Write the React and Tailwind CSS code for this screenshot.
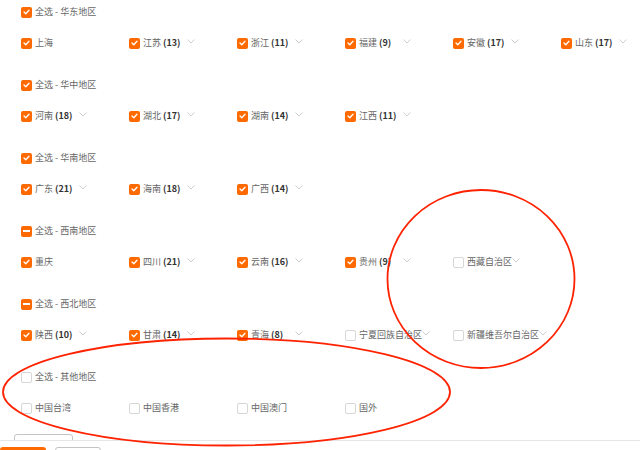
import React from "react";

const GROUPS = [
  {
    title: "华东地区",
    state: "all",
    items: [
      { name: "上海", on: true },
      { name: "江苏", count: 13, on: true },
      { name: "浙江", count: 11, on: true },
      { name: "福建", count: 9, on: true },
      { name: "安徽", count: 17, on: true },
      { name: "山东", count: 17, on: true },
    ],
  },
  {
    title: "华中地区",
    state: "all",
    items: [
      { name: "河南", count: 18, on: true },
      { name: "湖北", count: 17, on: true },
      { name: "湖南", count: 14, on: true },
      { name: "江西", count: 11, on: true },
    ],
  },
  {
    title: "华南地区",
    state: "all",
    items: [
      { name: "广东", count: 21, on: true },
      { name: "海南", count: 18, on: true },
      { name: "广西", count: 14, on: true },
    ],
  },
  {
    title: "西南地区",
    state: "some",
    items: [
      { name: "重庆", on: true },
      { name: "四川", count: 21, on: true },
      { name: "云南", count: 16, on: true },
      { name: "贵州", count: 9, on: true },
      { name: "西藏自治区", on: false, arrow: true },
    ],
  },
  {
    title: "西北地区",
    state: "some",
    items: [
      { name: "陕西", count: 10, on: true },
      { name: "甘肃", count: 14, on: true },
      { name: "青海", count: 8, on: true },
      { name: "宁夏回族自治区", on: false, arrow: true },
      { name: "新疆维吾尔自治区", on: false, arrow: true },
    ],
  },
  {
    title: "其他地区",
    state: "none",
    items: [
      { name: "中国台湾", on: false },
      { name: "中国香港", on: false },
      { name: "中国澳门", on: false },
      { name: "国外", on: false },
    ],
  },
];

function Box({ state }) {
  if (state === "none") {
    return <span className="w-[11px] h-[11px] shrink-0 rounded-[2px] border border-[#d6d6d6] bg-white" />;
  }
  return (
    <span className="w-[11px] h-[11px] shrink-0 rounded-[2px] bg-[#ff6a00] flex items-center justify-center">
      {state === "some" ? (
        <span className="w-[7px] h-[2px] bg-white" />
      ) : (
        <svg width="7" height="6" viewBox="0 0 7 6" fill="none" stroke="#fff" strokeWidth="1.3" strokeLinecap="round" strokeLinejoin="round">
          <polyline points="1,3 2.8,4.8 6,1.2" />
        </svg>
      )}
    </span>
  );
}

function Chevron() {
  return (
    <svg className="shrink-0 mb-[4px]" width="8" height="5" viewBox="0 0 8 5" fill="none" stroke="#c8c8c8" strokeWidth="0.9">
      <polyline points="0.5,0.5 4,4 7.5,0.5" />
    </svg>
  );
}

function Item({ item }) {
  const hasArrow = item.count != null || item.arrow;
  return (
    <div className="flex items-center h-[20px] whitespace-nowrap">
      <Box state={item.on ? "all" : "none"} />
      <span className="ml-[3px] min-w-[44px] text-[#666]">
        {item.name}
        {item.count != null && <b className="ml-[2px] font-bold text-[#333]">({item.count})</b>}
      </span>
      {hasArrow && <Chevron />}
    </div>
  );
}

export default function App() {
  return (
    <div
      className="relative w-[640px] h-[450px] overflow-hidden bg-white text-[9px] leading-[20px]"
      style={{ fontFamily: "'Noto Sans CJK SC', 'Noto Sans', sans-serif" }}
    >
      <div className="pl-[21px] pt-[2px] flex flex-col gap-[22px]">
        {GROUPS.map((g) => (
          <div key={g.title} className="flex flex-col gap-[11px]">
            <div className="flex items-center h-[20px]">
              <Box state={g.state} />
              <span className="ml-[3px] text-[#666]">全选 - {g.title}</span>
            </div>
            <div className="grid grid-cols-[repeat(6,108px)]">
              {g.items.map((it) => (
                <Item key={it.name} item={it} />
              ))}
            </div>
          </div>
        ))}
      </div>

      <div className="ml-[14px] mt-[16px] h-[6px] overflow-hidden">
        <div className="w-[59px] h-[24px] rounded-[3px] border border-[#c4c4c4]" />
      </div>

      <div className="border-t border-[#e6e6e6] pt-[6px] flex gap-[9px]">
        <div className="w-[46px] h-[24px] rounded-[3px] bg-[#ff6a00]" />
        <div className="w-[46px] h-[24px] rounded-[3px] border border-[#c4c4c4]" />
      </div>

      {/* red annotation marks */}
      <svg className="absolute inset-0 pointer-events-none" width="640" height="450" viewBox="0 0 640 450" fill="none" stroke="#ff2200" strokeWidth="1.8">
        <ellipse cx="481" cy="279" rx="93.5" ry="89" />
        <ellipse cx="226.5" cy="392" rx="223.5" ry="53.5" />
      </svg>
    </div>
  );
}
